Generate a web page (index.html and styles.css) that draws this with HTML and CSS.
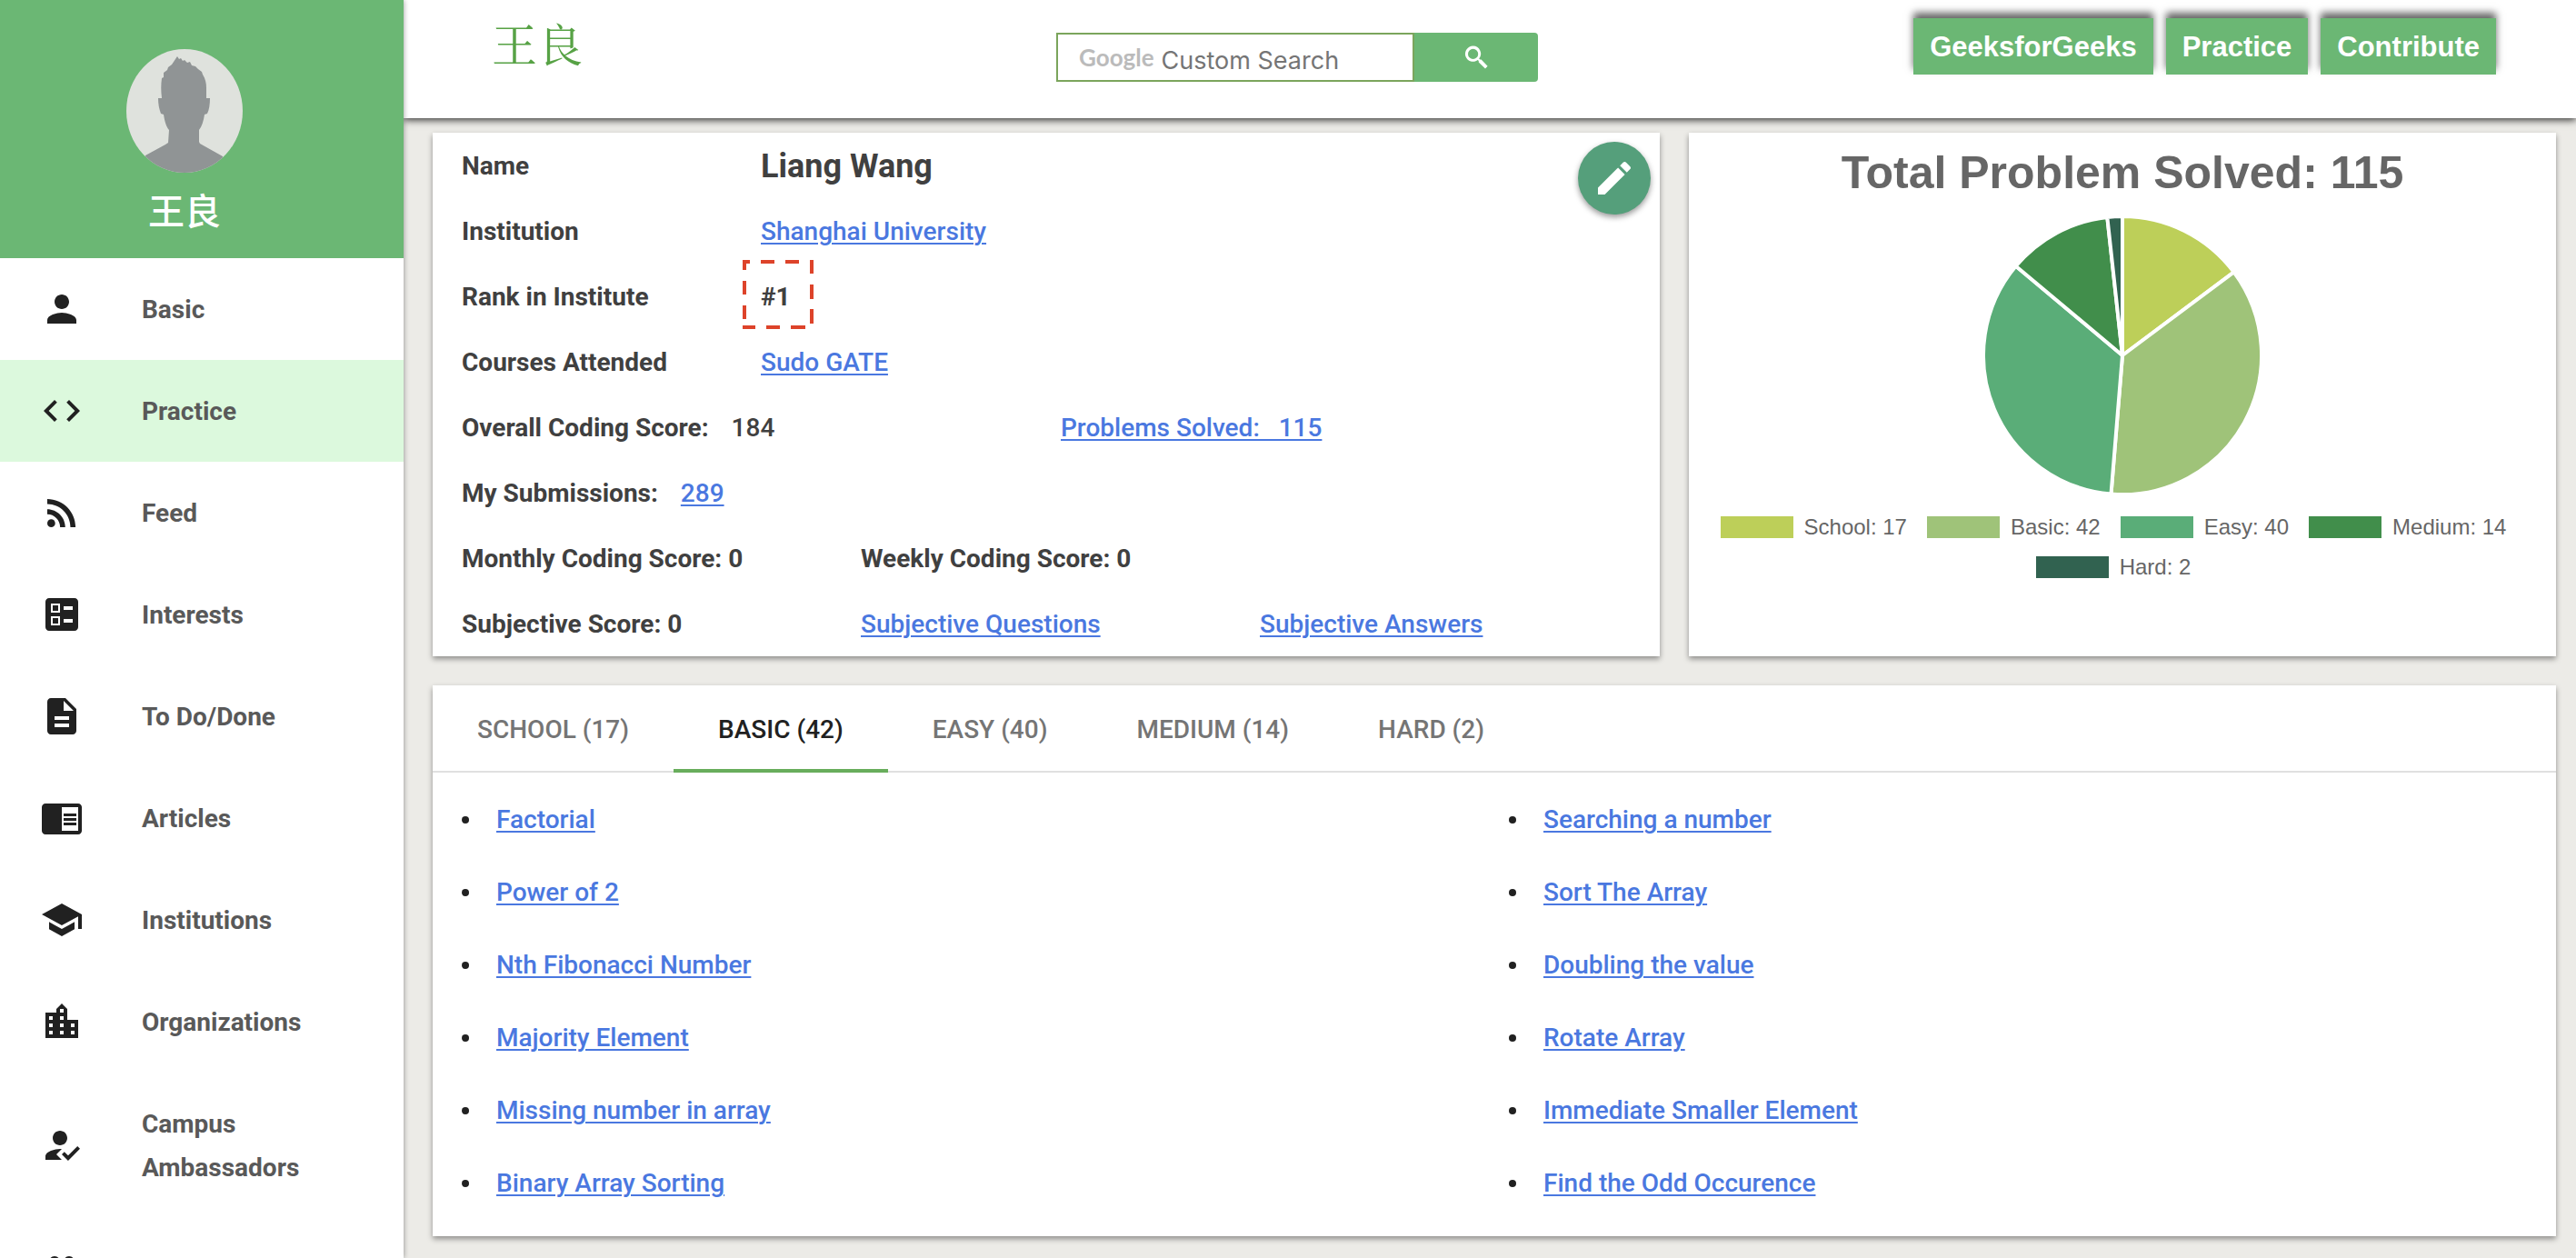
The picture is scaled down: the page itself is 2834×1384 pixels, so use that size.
FILE: index.html
```html
<!DOCTYPE html>
<html lang="en">
<head>
<meta charset="utf-8">
<title>王良 | Practice</title>
<link rel="stylesheet" href="styles.css">
</head>
<body>
<div class="app">
  <aside class="sidebar">
    <div class="profile">
      <svg class="avatar" viewBox="0 0 128 136" role="img" aria-label="Profile picture">
        <defs><clipPath id="face"><ellipse cx="64" cy="68" rx="64" ry="68"/></clipPath></defs>
        <g clip-path="url(#face)">
          <rect width="128" height="136" fill="#dfe2dd"/>
          <path fill="#909495" d="M56 8l2 3 2-1 2 3 2-1 3 3 3-1 2 4 4 1 3 3 4 3 1 3c3 5 4 9 4 15l0 11h4c0 7-1 13-3 17l-3 1c-1 7-3 13-6 17v13l1 2 25 14v22H21V117l22-12 3-2 1-14c-3-3-5-10-6-17l-3-1c-2-5-3-11-3-17h4c-1-8-1-15 0-22l2-1 0-5 4-3 1-3 4-3z"/>
        </g>
      </svg>
      <div class="profile-name">王良</div>
    </div>
    <nav class="menu">
      <a class="item" href="#basic"><svg class="icon" viewBox="0 0 24 24"><path d="M12 12c2.210 0 4-1.790 4-4s-1.790-4-4-4-4 1.790-4 4 1.790 4 4 4zm0 2c-2.670 0-8 1.340-8 4v2h16v-2c0-2.660-5.330-4-8-4z"/></svg><span>Basic</span></a>
      <a class="item active" href="#practice"><svg class="icon" viewBox="0 0 24 24"><path d="M9.400 16.600L4.800 12l4.600-4.600L8 6l-6 6 6 6 1.400-1.400zm5.200 0l4.600-4.600-4.600-4.600L16 6l6 6-6 6-1.400-1.400z"/></svg><span>Practice</span></a>
      <a class="item" href="#feed"><svg class="icon" viewBox="0 0 24 24"><circle cx="6.180" cy="17.820" r="2.180"/><path d="M4 4.440v2.830c7.030 0 12.730 5.700 12.730 12.730h2.830c0-8.590-6.970-15.560-15.560-15.560zm0 5.660v2.830c3.900 0 7.070 3.170 7.070 7.070h2.830c0-5.470-4.430-9.900-9.900-9.900z"/></svg><span>Feed</span></a>
      <a class="item" href="#interests"><svg class="icon" viewBox="0 0 24 24"><path fill-rule="evenodd" d="M19 3H5c-1.100 0-2 .9-2 2v14c0 1.100.9 2 2 2h14c1.100 0 2-.9 2-2V5c0-1.100-.9-2-2-2zM13 7.500h5v2h-5zM13 14.500h5v2h-5zM6 6h5v5H6zM6 13h5v5H6z"/><path d="M7 7h3v3H7zM7 14h3v3H7z"/></svg><span>Interests</span></a>
      <a class="item" href="#todo"><svg class="icon" viewBox="0 0 24 24"><path d="M14 2H6c-1.100 0-1.990.9-1.990 2L4 20c0 1.100.89 2 1.990 2H18c1.100 0 2-.9 2-2V8l-6-6zm2 16H8v-2h8v2zm0-4H8v-2h8v2zm-3-5V3.500L18.500 9H13z"/></svg><span>To Do/Done</span></a>
      <a class="item" href="#articles"><svg class="icon" viewBox="0 0 24 24"><path d="M13 12h7v1.500h-7zm0-2.500h7V11h-7zm0 5h7V16h-7zM21 4H3c-1.100 0-2 .9-2 2v13c0 1.100.9 2 2 2h18c1.100 0 2-.9 2-2V6c0-1.100-.9-2-2-2zm0 15h-9V6h9v13z"/></svg><span>Articles</span></a>
      <a class="item" href="#institutions"><svg class="icon" viewBox="0 0 24 24"><path d="M5 13.180v4L12 21l7-3.820v-4L12 17l-7-3.820zM12 3L1 9l11 6 9-4.910V17h2V9L12 3z"/></svg><span>Institutions</span></a>
      <a class="item" href="#organizations"><svg class="icon" viewBox="0 0 24 24"><path d="M15 11V5l-3-3-3 3v2H3v14h18V11h-6zm-8 8H5v-2h2v2zm0-4H5v-2h2v2zm0-4H5V9h2v2zm6 8h-2v-2h2v2zm0-4h-2v-2h2v2zm0-4h-2V9h2v2zm0-4h-2V5h2v2zm6 12h-2v-2h2v2zm0-4h-2v-2h2v2z"/></svg><span>Organizations</span></a>
      <a class="item tall" href="#ambassadors"><svg class="icon" viewBox="0 0 24 24"><path d="M9 17l3-2.940c-.39-.04-.68-.06-1-.06-2.670 0-8 1.340-8 4v2h9l-3-3zm2-5c2.210 0 4-1.790 4-4s-1.790-4-4-4-4 1.790-4 4 1.790 4 4 4M15.470 20.500L12 17l1.400-1.410 2.070 2.080 5.130-5.170 1.400 1.410z"/></svg><span>Campus Ambassadors</span></a>
      <a class="item" href="#groups" aria-label="Groups"><svg class="icon" viewBox="0 0 24 24"><path d="M16 11c1.660 0 2.990-1.340 2.990-3S17.660 5 16 5c-1.660 0-3 1.340-3 3s1.340 3 3 3zm-8 0c1.660 0 2.990-1.340 2.990-3S9.660 5 8 5C6.340 5 5 6.340 5 8s1.340 3 3 3zm0 2c-2.330 0-7 1.170-7 3.500V19h14v-2.500c0-2.330-4.670-3.500-7-3.500zm8 0c-.29 0-.62.02-.97.05 1.160.84 1.970 1.970 1.970 3.450V19h6v-2.500c0-2.330-4.670-3.500-7-3.500z"/></svg></a>
    </nav>
  </aside>

  <div class="page">
    <header class="topbar">
      <div class="brand">王良</div>
      <form class="search" role="search">
        <label class="field">
          <span class="google">Google</span>
          <input class="query" type="text" placeholder="Custom Search" aria-label="Custom Search">
        </label>
        <button class="go" type="button" aria-label="Search"><svg viewBox="0 0 13 13"><path d="M4.800 0.300a4.300 4.300 0 1 0 2.600 7.700l.5.500v.7l3.600 3.500 1.300-1.300-3.500-3.600h-.7l-.5-.5A4.300 4.300 0 0 0 4.800.3zm0 1.600a2.800 2.800 0 1 1 0 5.600 2.800 2.800 0 0 1 0-5.600z"/></svg></button>
      </form>
      <nav class="links">
        <a href="#gfg">GeeksforGeeks</a>
        <a href="#practice">Practice</a>
        <a href="#contribute">Contribute</a>
      </nav>
    </header>

    <main class="content">
      <section class="card info">
        <div class="row pair"><span>Name</span><span class="full-name">Liang Wang</span></div>
        <div class="row pair"><span>Institution</span><span><a href="#su">Shanghai University</a></span></div>
        <div class="row pair"><span>Rank in Institute</span><span class="rank">#1<svg class="mark" viewBox="0 0 78 76" fill="none" stroke="#dd432a" stroke-width="4"><path d="M0 2h8M20 2h15M47 2h15M0 74h14M26 74h15M53 74h16M2 0v11M2 23v15M2 50v15M76 0v15M76 27v16M76 54v16"/></svg></span></div>
        <div class="row pair"><span>Courses Attended</span><span><a href="#sudo">Sudo GATE</a></span></div>
        <div class="row halves"><span class="stat">Overall Coding Score: <b>184</b></span><a class="stat" href="#solved">Problems Solved: &nbsp; 115</a></div>
        <div class="row"><span class="stat">My Submissions: <a href="#subs">289</a></span></div>
        <div class="row thirds"><span>Monthly Coding Score: 0</span><span>Weekly Coding Score: 0</span></div>
        <div class="row thirds"><span>Subjective Score: 0</span><span><a href="#q">Subjective Questions</a></span><span><a href="#a">Subjective Answers</a></span></div>
        <button class="edit" type="button" aria-label="Edit profile"><svg viewBox="0 0 24 24"><path d="M3 17.250V21h3.750L17.810 9.940l-3.750-3.750L3 17.250zM20.710 7.040c.39-.39.39-1.020 0-1.410l-2.340-2.340c-.39-.39-1.020-.39-1.410 0l-1.830 1.830 3.750 3.750 1.830-1.830z"/></svg></button>
      </section>

      <section class="card chart">
        <h2 class="chart-title">Total Problem Solved: 115</h2>
        <svg class="pie" viewBox="-153 -153 306 306" role="img" aria-label="Problems solved by difficulty">
          <g stroke="#fff" stroke-width="4" stroke-linejoin="bevel">
            <path fill="#bdcf59" d="M0 0V-153A153 153 0 0 1 122.600 -91.600Z"/>
            <path fill="#9fc379" d="M0 0L122.600 -91.600A153 153 0 0 1 -12.500 152.500Z"/>
            <path fill="#5aad78" d="M0 0L-12.500 152.500A153 153 0 0 1 -117.300 -98.200Z"/>
            <path fill="#418e4b" d="M0 0L-117.300 -98.200A153 153 0 0 1 -16.700 -152.100Z"/>
            <path fill="#316250" d="M0 0L-16.700 -152.100A153 153 0 0 1 0 -153Z"/>
          </g>
        </svg>
        <ul class="legend">
          <li><i class="key school"></i>School: 17</li>
          <li><i class="key basic"></i>Basic: 42</li>
          <li><i class="key easy"></i>Easy: 40</li>
          <li><i class="key medium"></i>Medium: 14</li>
          <li><i class="key hard"></i>Hard: 2</li>
        </ul>
      </section>

      <section class="card problems">
        <div class="tabs" role="tablist">
          <button class="tab" role="tab" type="button">SCHOOL (17)</button>
          <button class="tab current" role="tab" type="button" aria-selected="true">BASIC (42)</button>
          <button class="tab" role="tab" type="button">EASY (40)</button>
          <button class="tab" role="tab" type="button">MEDIUM (14)</button>
          <button class="tab" role="tab" type="button">HARD (2)</button>
        </div>
        <ul class="list">
          <li><a href="#p1">Factorial</a></li>
          <li><a href="#p2">Searching a number</a></li>
          <li><a href="#p3">Power of 2</a></li>
          <li><a href="#p4">Sort The Array</a></li>
          <li><a href="#p5">Nth Fibonacci Number</a></li>
          <li><a href="#p6">Doubling the value</a></li>
          <li><a href="#p7">Majority Element</a></li>
          <li><a href="#p8">Rotate Array</a></li>
          <li><a href="#p9">Missing number in array</a></li>
          <li><a href="#p10">Immediate Smaller Element</a></li>
          <li><a href="#p11">Binary Array Sorting</a></li>
          <li><a href="#p12">Find the Odd Occurence</a></li>
        </ul>
      </section>
    </main>
  </div>
</div>
</body>
</html>
```
FILE: styles.css
```css
* { box-sizing: border-box; }

body {
  margin: 0;
  font: 500 28px/48px Roboto, "Noto Sans CJK SC", sans-serif;
  color: #404040;
  background: #ecebe7;
}

a { color: #4a78e0; text-underline-offset: 3px; text-decoration-thickness: 2px; }
button { font: inherit; border: 0; cursor: pointer; }
ul { margin: 0; padding: 0; list-style: none; }

.app { display: flex; height: 100vh; overflow: hidden; }

/* Sidebar */
.sidebar {
  position: relative;
  z-index: 2;
  flex: none;
  width: 444px;
  overflow: hidden;
  background: #fff;
  box-shadow: 0 0 6px rgba(0, 0, 0, .4);
}
.profile {
  display: flex;
  flex-direction: column;
  align-items: center;
  height: 284px;
  padding: 54px 38px 0 0;
  background: #6bb774;
}
.avatar { flex: none; width: 128px; height: 136px; }
.profile-name { padding-top: 20px; font-size: 40px; line-height: 48px; color: #fff; font-weight: 500; }
.item {
  display: flex;
  align-items: center;
  min-height: 112px;
  padding: 8px 80px 8px 44px;
  gap: 64px;
  color: #595959;
  font-weight: 700;
  text-decoration: none;
}
.item span { padding-top: 2px; }
.item.active { background: #dcf9dd; }
.item.tall { min-height: 160px; }
.icon { flex: none; width: 48px; height: 48px; fill: #212121; }

/* Top bar */
.page { flex: 1; min-width: 0; }
.topbar {
  position: relative;
  z-index: 1;
  display: grid;
  grid-template-columns: 718px 530px 1fr;
  align-items: start;
  height: 130px;
  background: #fff;
  box-shadow: 0 2px 8px rgba(0, 0, 0, .8);
}
.brand {
  padding: 12px 0 0 97px;
  font-family: "Noto Serif CJK SC", "Noto Sans CJK SC", serif;
  font-size: 50px;
  line-height: 68px;
  font-weight: 400;
  color: #57a245;
}
.search { display: flex; height: 54px; margin-top: 36px; }
.field { display: flex; align-items: center; width: 394px; padding: 6px 0 0 23px; gap: 8px; border: 2px solid #7ba55c; }
.google { padding-bottom: 6px; color: #bbb; font: 700 26px/40px Lato, sans-serif; }
.query { flex: 1; min-width: 0; border: 0; padding: 2px 0 0; outline: 0; font: 400 27px/40px Inter, sans-serif; }
.query::placeholder { color: #757575; opacity: 1; }
.go { display: grid; place-items: center; width: 136px; padding: 0; border-radius: 0 4px 4px 0; background: #6bb774; }
.go svg { width: 26px; height: 26px; fill: #fff; }
.links { display: flex; justify-content: flex-end; gap: 14px; padding: 20px 88px 0 0; }
.links a {
  padding: 2px 18px 0;
  font: 700 31px/60px "Liberation Sans", Arial, sans-serif;
  color: #fff;
  text-decoration: none;
  background: #6bb774;
  box-shadow: 0 -6px 8px rgba(0, 0, 0, .6);
}

/* Cards */
.content {
  display: grid;
  grid-template-columns: 1350fr 954fr;
  gap: 32px;
  padding: 16px 22px 24px 32px;
}
.card { background: #fff; box-shadow: 0 3px 6px rgba(0, 0, 0, .4); }
.info { position: relative; font-weight: 700; }
.info a { font-weight: 500; }
.row { display: grid; height: 72px; padding: 2px 32px 0; align-items: center; }
.pair { grid-template-columns: 329px 1fr; }
.halves { grid-template-columns: 1fr 1fr; column-gap: 32px; }
.thirds { grid-template-columns: 439px 439px 1fr; }
.full-name { font-size: 36px; }
.stat { white-space: pre; }
.stat b, .stat a { margin-left: 18px; font-weight: 500; }
.rank { position: relative; }
.mark { position: absolute; left: -20px; top: -17px; width: 78px; height: 76px; }
.edit {
  position: absolute;
  top: 10px;
  right: 10px;
  display: grid;
  place-items: center;
  width: 80px;
  height: 80px;
  padding: 0;
  border-radius: 50%;
  background: #559f7b;
  box-shadow: 0 3px 6px rgba(0, 0, 0, .4);
}
.edit svg { width: 48px; height: 48px; fill: #fff; }

/* Chart */
.chart { display: flex; flex-direction: column; align-items: center; padding-top: 14px; font-family: "Liberation Sans", Arial, sans-serif; color: #666; }
.chart-title { margin: 0; font-size: 50px; line-height: 60px; }
.pie { width: 306px; height: 306px; margin-top: 18px; }
.legend { display: flex; flex-wrap: wrap; justify-content: center; column-gap: 22px; margin-top: 14px; padding-right: 20px; font-size: 24px; line-height: 44px; font-weight: 400; }
.legend li { display: flex; align-items: center; gap: 12px; }
.key { width: 80px; height: 24px; }
.school { background: #bdcf59; }
.basic { background: #9fc379; }
.easy { background: #5aad78; }
.medium { background: #418e4b; }
.hard { background: #316250; }

/* Problems */
.problems { grid-column: 1 / -1; }
.tabs { display: flex; height: 96px; border-bottom: 2px solid #e0e0e0; }
.tab { height: 96px; padding: 2px 49px 0; background: none; color: #757575; font-weight: 500; }
.current { color: #212121; border-bottom: 4px solid #68ad5c; padding-top: 6px; }
.list { display: grid; grid-template-columns: 1fr 1fr; column-gap: 32px; padding: 12px 32px 18px; line-height: 80px; }
.list li { display: flex; align-items: center; gap: 30px; }
.list li::before { content: ""; width: 8px; height: 8px; border-radius: 50%; background: #212121; }
```
